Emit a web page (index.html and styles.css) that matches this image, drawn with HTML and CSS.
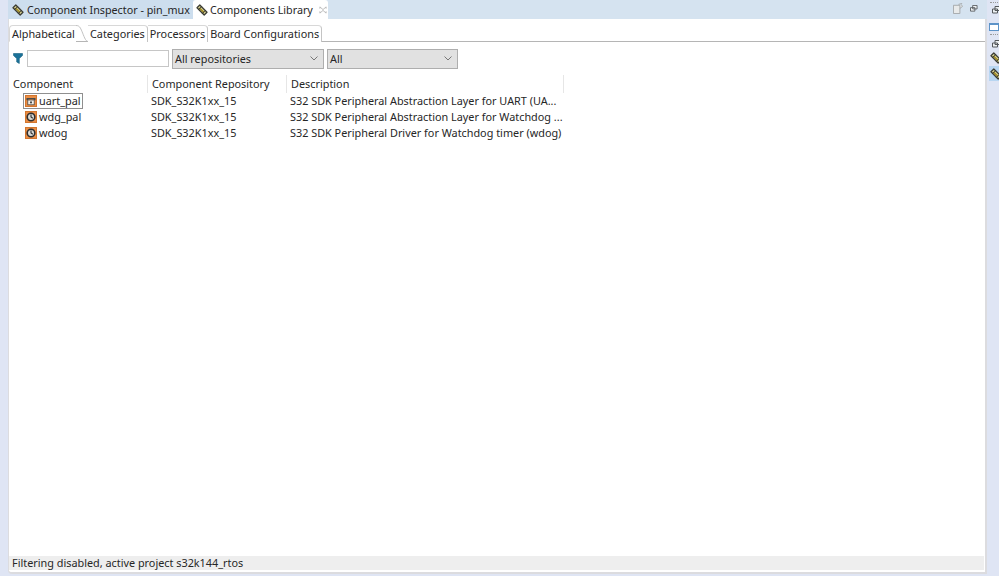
FILE: index.html
```html
<!DOCTYPE html>
<html lang="en">
<head>
  <meta charset="UTF-8" />
  <title>Components Library</title>
  <link rel="stylesheet" href="styles.css">
</head>
<body>
  <div class="left-strip"></div>

  <div class="main">
    <!-- View tabs -->
    <div class="view-tabs">
      <div class="view-tab">
        <svg class="tab-icon" viewBox="0 0 12 12"><use href="#chip" /></svg>
        <span>Component Inspector - pin_mux</span>
      </div>
      <div class="view-tab active">
        <svg class="tab-icon" viewBox="0 0 12 12"><use href="#chip" /></svg>
        <span>Components Library</span>
        <svg class="tab-close" viewBox="0 0 9 9"><path d="M1 1l3.5 3L8 1M1 8l3.5-3L8 8M1 1v2M8 1v2M1 8V6M8 8V6" /></svg>
      </div>
      <div class="view-actions">
        <svg class="action-new" viewBox="0 0 12 12"><path d="M.5 2.5h7v9h-7zM6 1.5l4-1M8.5 1.5l2 2-3 2.5" /></svg>
        <svg class="action-min" viewBox="0 0 9 8"><path d="M3 .5h5v4H3zM.5 3h5v4h-5z" /></svg>
      </div>
    </div>

    <div class="panel">
      <!-- Sub tabs -->
      <div class="sub-tabs">
        <div class="sub-tab first">Alphabetical</div>
        <svg class="tab-curve" viewBox="0 0 14 17" preserveAspectRatio="none"><path d="M0 .5c4 0 5 2 7 6s4 10 7 10" /></svg>
        <div class="sub-tab">Categories</div>
        <div class="sub-tab">Processors</div>
        <div class="sub-tab">Board Configurations</div>
      </div>

      <!-- Filter row -->
      <div class="filter-row">
        <svg class="funnel" viewBox="0 0 10 11"><path d="M.5 .5h9v2L6.3 5.5V10.5L3.7 9V5.5L.5 2.5z" /></svg>
        <input class="search" type="text" />
        <div class="combo repo">
          <span>All repositories</span>
          <svg viewBox="0 0 8 5"><path d="M.5 .5L4 4 7.5 .5" /></svg>
        </div>
        <div class="combo kind">
          <span>All</span>
          <svg viewBox="0 0 8 5"><path d="M.5 .5L4 4 7.5 .5" /></svg>
        </div>
      </div>

      <!-- Component table -->
      <div class="table">
        <div class="row head">
          <div class="cell">Component</div>
          <div class="cell">Component Repository</div>
          <div class="cell">Description</div>
        </div>
        <div class="row">
          <div class="cell name">
            <span class="name-box selected">
              <svg class="comp-icon" viewBox="0 0 12 12"><use href="#uart" /></svg>uart_pal
            </span>
          </div>
          <div class="cell">SDK_S32K1xx_15</div>
          <div class="cell">S32 SDK Peripheral Abstraction Layer for UART (UA...</div>
        </div>
        <div class="row">
          <div class="cell name">
            <span class="name-box">
              <svg class="comp-icon" viewBox="0 0 12 12"><use href="#clock" /></svg>wdg_pal
            </span>
          </div>
          <div class="cell">SDK_S32K1xx_15</div>
          <div class="cell">S32 SDK Peripheral Abstraction Layer for Watchdog ...</div>
        </div>
        <div class="row">
          <div class="cell name">
            <span class="name-box">
              <svg class="comp-icon" viewBox="0 0 12 12"><use href="#clock" /></svg>wdog
            </span>
          </div>
          <div class="cell">SDK_S32K1xx_15</div>
          <div class="cell">S32 SDK Peripheral Driver for Watchdog timer (wdog)</div>
        </div>
      </div>

      <div class="status">Filtering disabled, active project s32k144_rtos</div>
    </div>
  </div>

  <!-- Collapsed side views -->
  <div class="right-strip">
    <div class="strip-sep top"></div>
    <svg class="strip-small first" viewBox="0 0 9 8"><path d="M3 .5h5v4H3zM.5 3h5v4h-5z" /></svg>
    <div class="strip-window"></div>
    <div class="strip-sep"></div>
    <svg class="strip-small" viewBox="0 0 9 8"><path d="M3 .5h5v4H3zM.5 3h5v4h-5z" /></svg>
    <svg class="strip-chip" viewBox="0 0 12 12"><use href="#chip" /></svg>
    <div class="strip-active"><svg class="strip-chip" viewBox="0 0 12 12"><use href="#chip" /></svg></div>
  </div>

  <!-- Shared icons -->
  <svg class="defs" width="0" height="0">
    <defs>
      <g id="chip">
        <path d="M3.8 1L11 8.2 8.2 11 1 3.8z" fill="#d9d49a" stroke="#3c3d34" stroke-width="1.3" stroke-linejoin="round" />
        <path d="M3.4 3.9L8.1 8.6" stroke="#a08a1e" stroke-width="1.4" />
        <path d="M5.6 2.6L2.6 5.6M9.4 6.4L6.4 9.4" stroke="#2c2e28" stroke-width=".9" />
      </g>
      <g id="uart">
        <rect x=".5" y=".5" width="11" height="11" fill="#ea8d45" stroke="#d2762e" />
        <path d="M1.5 3h9v2.2H8.7V4.2H3.3v1H1.5z" fill="#4a4a48" />
        <rect x="2.8" y="5" width="6.4" height="4.8" fill="#f3efe8" stroke="#4a4a48" stroke-width=".8" />
        <circle cx="6" cy="7.4" r="1.1" fill="#4a4a48" />
      </g>
      <g id="clock">
        <rect x=".5" y=".5" width="11" height="11" fill="#ea8d45" stroke="#d2762e" />
        <circle cx="6" cy="6" r="3.8" fill="#d9d9d4" stroke="#2e2e2e" stroke-width="1.6" />
        <path d="M6 3.6V6l1.8 1.3" fill="none" stroke="#2e2e2e" stroke-width="1.1" />
      </g>
    </defs>
  </svg>
</body>
</html>
```

FILE: styles.css
```css
/* Reset and base styling */
* {
  box-sizing: border-box;
  margin: 0;
  padding: 0;
}

body {
  width: 999px;
  height: 576px;
  overflow: hidden;
  display: flex;
  font-family: "Noto Sans", "Open Sans", sans-serif;
  font-size: 10.85px;
  color: #262626;
  background: #dfe5f4;
}

.left-strip {
  width: 8px;
  flex: none;
}

.main {
  width: 979px;
  flex: none;
  display: flex;
  flex-direction: column;
  padding-bottom: 2px;
}

/* View tabs */
.view-tabs {
  height: 19px;
  flex: none;
  display: flex;
  background: #d5e3f0;
}

.view-tab {
  display: flex;
  align-items: center;
  gap: 3px;
  width: 185px;
  height: 19px;
  padding-left: 4px;
  font-size: 10.75px;
  white-space: nowrap;
  background: #cddeee;
}

.view-tab.active {
  width: 135px;
  padding-left: 3px;
  gap: 2px;
  background: #fff;
  border-radius: 3px 3px 0 0;
}

.tab-icon {
  width: 12px;
  height: 12px;
  flex: none;
}

.tab-close {
  width: 8px;
  height: 8px;
  flex: none;
  margin-left: 4px;
  fill: none;
  stroke: #b4b4b4;
  stroke-width: 1;
}

.view-actions {
  margin-left: auto;
  display: flex;
  align-items: center;
  gap: 6px;
  padding: 0 9px 3px 0;
}

.action-new {
  width: 11px;
  height: 11px;
  fill: #e8eaea;
  stroke: #a3a6a8;
}

.action-min {
  width: 8px;
  height: 7px;
  fill: #eef1f3;
  stroke: #55595c;
}

/* Panel */
.panel {
  flex: 1;
  min-height: 0;
  display: flex;
  flex-direction: column;
  background: #fff;
  border-left: 1px solid #dcdcdf;
  border-right: 2px solid #dcdcdf;
  border-bottom: 2px solid #dcdcdf;
  border-radius: 0 0 0 4px;
}

.sub-tabs {
  height: 23px;
  flex: none;
  display: flex;
  align-items: flex-end;
  border-bottom: 1px solid #b5b5b5;
}

.sub-tab {
  height: 17px;
  line-height: 15px;
  padding: 0 2px;
  margin-bottom: -1px;
  border-top: 1px solid #d8d8d8;
  border-right: 1px solid #c4c4c4;
  border-radius: 0 4px 0 0;
  background: #fff;
  white-space: nowrap;
}

.sub-tab.first {
  width: 67px;
  border-right: none;
  border-left: 1px solid #d8d8d8;
  border-radius: 4px 0 0 0;
  border-bottom: 1px solid #fff;
}

.tab-curve {
  width: 12px;
  height: 17px;
  flex: none;
  margin-bottom: -1px;
  fill: none;
  stroke: #bdbdbd;
}

.filter-row {
  height: 33px;
  flex: none;
  display: flex;
  align-items: center;
  padding-left: 4px;
}

.funnel {
  width: 10px;
  height: 11px;
  flex: none;
  margin-right: 4px;
  fill: #1c7299;
  stroke: #125f80;
  stroke-width: .6;
}

.search {
  width: 142px;
  height: 17px;
  border: 1px solid #c6c6c6;
  background: #fff;
  outline: none;
}

.combo {
  height: 20px;
  display: flex;
  align-items: center;
  justify-content: space-between;
  padding: 0 5px 0 2px;
  background: #e1e1e1;
  border: 1px solid #aeaeae;
}

.combo svg {
  width: 8px;
  height: 5px;
  fill: none;
  stroke: #777;
}

.combo.repo {
  width: 152px;
  margin-left: 3px;
}

.combo.kind {
  width: 131px;
  margin-left: 3px;
}

/* Table */
.table {
  flex: 1;
  min-height: 0;
}

.row {
  display: grid;
  grid-template-columns: 139px 139px 277px;
  height: 16px;
  line-height: 16px;
  white-space: nowrap;
}

.row.head {
  height: 18px;
  line-height: 18px;
}

.cell {
  padding-left: 3px;
}

.row.head .cell {
  padding-left: 4px;
  border-right: 1px solid #e6e6e6;
}

.cell.name {
  padding-left: 14px;
}

.name-box {
  display: inline-flex;
  align-items: center;
  gap: 2px;
  height: 16px;
  padding: 0 1px;
  border: 1px solid transparent;
}

.name-box.selected {
  border-color: #8f8f8f;
}

.comp-icon {
  width: 12px;
  height: 12px;
  flex: none;
}

.status {
  height: 14px;
  flex: none;
  margin-right: 1px;
  margin-bottom: 2px;
  padding-left: 3px;
  line-height: 14px;
  background: #eeeeee;
}

/* Collapsed side views */
.right-strip {
  width: 12px;
  flex: none;
  display: flex;
  flex-direction: column;
  align-items: flex-start;
  padding: 2px 0 0 2px;
}

.strip-small {
  width: 9px;
  height: 8px;
  flex: none;
  margin: 5px 0 0 3px;
  fill: #eef1f3;
  stroke: #55595c;
}

.strip-small.first {
  margin-top: 3px;
}

.strip-sep {
  width: 10px;
  margin: 3px 0 0 1px;
  border-top: 1px dotted #9a9a9a;
}

.strip-sep.top {
  margin-top: 0;
}

.strip-window {
  width: 10px;
  height: 8px;
  flex: none;
  margin-top: 9px;
  background: #fff;
  border: 1px solid #5d93c8;
  border-top-width: 2px;
}

.strip-chip {
  width: 12px;
  height: 12px;
  flex: none;
  margin: 4px 0 0 1px;
}

.strip-active {
  width: 10px;
  height: 15px;
  flex: none;
  margin-top: 2px;
  background: #b8d6f2;
}

.strip-active .strip-chip {
  display: block;
  margin-top: 2px;
}

.defs {
  position: absolute;
}
```
